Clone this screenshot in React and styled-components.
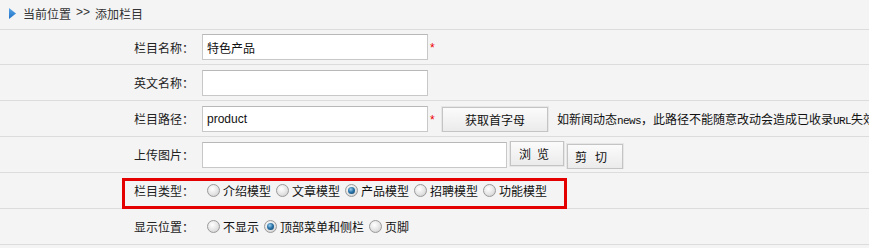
import React from "react";
import styled, { createGlobalStyle } from "styled-components";

const Global = createGlobalStyle`
  html, body { margin: 0; padding: 0; background: #f4f4f4; }
  body {
    font-family: "Liberation Sans", "Noto Sans CJK SC", sans-serif;
    font-size: 12px;
    color: #222;
    overflow: hidden;
  }
`;

const Page = styled.div`
  width: 869px;
  height: 248px;
  overflow: hidden;
  background: #f4f4f4;
`;

const Header = styled.div`
  box-sizing: border-box;
  height: 30px;
  border-bottom: 1px solid #dcdcdc;
  display: flex;
  align-items: center;
  gap: 7px;
  padding-left: 9px;
  padding-bottom: 3px;
  color: #333;
  font-size: 12px;
  white-space: nowrap;
`;

const Crumb = styled.span`
  display: flex;
  gap: 5px;
`;

const Row = styled.div`
  box-sizing: border-box;
  position: relative;
  height: ${(p) => p.$h || 36}px;
  border-bottom: 1px solid #dcdcdc;
  display: grid;
  grid-template-columns: 196px 1fr;
  align-items: center;
`;

const Label = styled.div`
  text-align: right;
  padding-right: 2px;
  white-space: nowrap;
  color: #222;
`;

const Field = styled.div`
  display: flex;
  align-items: center;
  padding-left: 6px;
  white-space: nowrap;
  min-width: 0;
  overflow: hidden;
`;

const Input = styled.div`
  box-sizing: border-box;
  width: ${(p) => p.$w || 226}px;
  height: 26px;
  border: 1px solid #c8c8c8;
  border-top-color: #b8b8b8;
  background: #fff;
  display: flex;
  align-items: center;
  padding-left: 4px;
  font-size: 12px;
  color: #111;
  flex: none;
`;

const Star = styled.span`
  color: #e00;
  font-size: 12px;
  margin-left: 2px;
  width: 8px;
  margin-top: 2px;
  flex: none;
`;

const Button = styled.div`
  box-sizing: border-box;
  height: ${(p) => p.$h || 25}px;
  width: ${(p) => p.$w}px;
  margin-left: ${(p) => p.$ml || 0}px;
  margin-top: ${(p) => p.$mt || 0}px;
  border: 1px solid #c4c4c4;
  background: linear-gradient(#fbfbfb, #ebebeb);
  box-shadow: 0 0 0 1px #e6e6e6;
  display: flex;
  align-items: center;
  justify-content: center;
  font-size: 12px;
  color: #111;
  letter-spacing: ${(p) => p.$ls || 0}px;
  flex: none;
`;

const Note = styled.span`
  margin-left: 9px;
  color: #111;
  font-size: 12px;
`;

const Mono = styled.span`
  font-family: "Liberation Mono", monospace;
  font-size: 11px;
  letter-spacing: -0.6px;
`;

const Options = styled.div`
  display: flex;
  align-items: center;
  gap: 5px;
  padding-left: 5px;
`;

const Option = styled.label`
  display: flex;
  align-items: center;
  gap: 3px;
  color: #111;
`;

const Radio = styled.span`
  box-sizing: border-box;
  width: 13px;
  height: 13px;
  border-radius: 50%;
  border: 1px solid #9a9a9a;
  background: radial-gradient(circle at 40% 35%, #ffffff 0%, #e4e4e4 55%, #c6c6c6 100%);
  display: flex;
  align-items: center;
  justify-content: center;
  flex: none;
  &::after {
    content: "";
    display: ${(p) => (p.$on ? "block" : "none")};
    width: 7px;
    height: 7px;
    border-radius: 50%;
    background: radial-gradient(circle at 40% 35%, #9fd0f0 0%, #2a74a8 45%, #0d3e66 100%);
  }
`;

const Highlight = styled.div`
  position: absolute;
  left: 122px;
  top: 5px;
  width: 445px;
  height: 31px;
  box-sizing: border-box;
  border: 3px solid #e50000;
  pointer-events: none;
`;

const Arrow = () => (
  <svg width="7" height="11" viewBox="0 0 7 11">
    <defs>
      <linearGradient id="ag" x1="0" y1="0" x2="0" y2="1">
        <stop offset="0" stopColor="#5aa6e8" />
        <stop offset="1" stopColor="#1d6fc4" />
      </linearGradient>
    </defs>
    <polygon points="0,0 7,5.5 0,11" fill="url(#ag)" />
  </svg>
);

const types = ["介绍模型", "文章模型", "产品模型", "招聘模型", "功能模型"];
const places = ["不显示", "顶部菜单和侧栏", "页脚"];

export default function App() {
  return (
    <Page>
      <Global />
      <Header>
        <Arrow />
        <Crumb>
          <span>当前位置</span>
          <span>&gt;&gt;</span>
          <span>添加栏目</span>
        </Crumb>
      </Header>
      <Row $h={35}>
        <Label>栏目名称：</Label>
        <Field>
          <Input>特色产品</Input>
          <Star>*</Star>
        </Field>
      </Row>
      <Row>
        <Label>英文名称：</Label>
        <Field>
          <Input />
        </Field>
      </Row>
      <Row>
        <Label>栏目路径：</Label>
        <Field>
          <Input>product</Input>
          <Star>*</Star>
          <Button $w={106} $ml={4} $mt={2}>获取首字母</Button>
          <Note>
            如新闻动态<Mono>news</Mono>，此路径不能随意改动会造成已收录<Mono>URL</Mono>失效
          </Note>
        </Field>
      </Row>
      <Row>
        <Label>上传图片：</Label>
        <Field>
          <Input $w={305} />
          <Button $w={54} $ml={3} $mt={-3} $ls={6}>浏览</Button>
          <Button $w={56} $ml={3} $mt={3} $ls={8}>剪切</Button>
        </Field>
      </Row>
      <Row>
        <Label>栏目类型：</Label>
        <Field>
          <Options>
            {types.map((t) => (
              <Option key={t}>
                <Radio $on={t === "产品模型"} />
                {t}
              </Option>
            ))}
          </Options>
        </Field>
        <Highlight />
      </Row>
      <Row>
        <Label>显示位置：</Label>
        <Field>
          <Options>
            {places.map((t) => (
              <Option key={t}>
                <Radio $on={t === "顶部菜单和侧栏"} />
                {t}
              </Option>
            ))}
          </Options>
        </Field>
      </Row>
    </Page>
  );
}
